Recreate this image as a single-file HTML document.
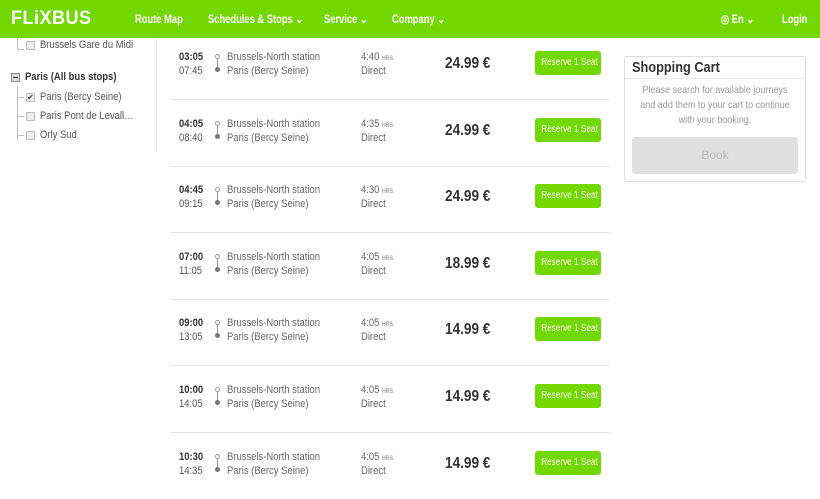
<!DOCTYPE html>
<html><head><meta charset="utf-8"><style>
*{margin:0;padding:0;box-sizing:border-box}
body{width:820px;height:499px;overflow:hidden;background:#fff;font-family:"Liberation Sans",sans-serif;color:#444;position:relative}
.hdr{position:absolute;left:0;top:0;width:820px;height:38px;background:#73d700}
.hdr span{position:absolute;top:12px;color:#fff;font-size:12px;font-weight:bold;transform:scaleX(.78);transform-origin:left;white-space:nowrap}
.logo{position:absolute;left:11px;top:8px;color:#fff;font-weight:900;font-size:19px;letter-spacing:.5px;transform:scaleX(.95);transform-origin:left}
.a{position:absolute;white-space:nowrap}
.n{transform:scaleX(.86);transform-origin:left}
.side{font-size:11px;color:#555}
.cb{position:absolute;width:9px;height:9px;border:1px solid #bbb;background:#eee;border-radius:1px}
.sep{position:absolute;left:170px;width:440px;height:1px;background:#e6e6e6}
.t1{font-size:11px;font-weight:bold;color:#333}
.t2{font-size:11px;color:#555}
.st{font-size:11px;color:#666}
.pr{font-size:16px;font-weight:bold;color:#333;transform:scaleX(.85);transform-origin:left}
.btn{position:absolute;left:535px;width:66px;height:24px;background:#73d700;border-radius:3px;color:#fff;font-size:10px;text-align:center;line-height:24px;white-space:nowrap}
.btn i{font-style:normal;display:inline-block;transform:scaleX(.82)}
.hrs{font-size:6px;color:#777}
</style></head><body>
<div class="hdr">
<div class="logo">FLiXBUS</div>
<span style="left:135px">Route Map</span>
<span style="left:208px">Schedules &amp; Stops ⌄</span>
<span style="left:324px">Service ⌄</span>
<span style="left:392px">Company ⌄</span>
<span style="left:721px">◎ En ⌄</span>
<span style="left:782px">Login</span>
</div>
<div class="a" style="left:156px;top:38px;width:1px;height:113px;background:#e6e6e6"></div>
<div class="a" style="left:17px;top:38px;height:12px;border-left:1px solid #bbb;border-bottom:1px solid #bbb;width:7px"></div>
<div class="cb" style="left:26px;top:41px"></div><div class="a side n" style="left:40px;top:39px">Brussels Gare du Midi</div>
<div class="a" style="left:11px;top:73px;width:9px;height:9px;border:1px solid #888;background:#ddd"></div>
<div class="a" style="left:13px;top:77px;width:5px;height:1px;background:#333"></div>
<div class="a side n" style="left:25px;top:71px;font-weight:bold;color:#333">Paris (All bus stops)</div>
<div class="a" style="left:17px;top:86px;height:54px;border-left:1px solid #bbb"></div>
<div class="a" style="left:17px;top:97px;width:7px;border-top:1px solid #bbb"></div>
<div class="a" style="left:17px;top:116px;width:7px;border-top:1px solid #bbb"></div>
<div class="a" style="left:17px;top:135px;width:7px;border-top:1px solid #bbb"></div>
<div class="cb" style="left:26px;top:93px;font-size:8px;line-height:7px;color:#333">✔</div><div class="a side n" style="left:40px;top:91px">Paris (Bercy Seine)</div>
<div class="cb" style="left:26px;top:112px"></div><div class="a side n" style="left:40px;top:110px">Paris Pont de Levall…</div>
<div class="cb" style="left:26px;top:131px"></div><div class="a side n" style="left:40px;top:129px">Orly Sud</div>

<div class="a" style="left:624px;top:56px;width:182px;height:126px;border:1px solid #ddd;border-radius:3px"></div>
<div class="a" style="left:625px;top:78px;width:180px;height:1px;background:#e6e6e6"></div>
<div class="a" style="left:632px;top:59px;font-size:15px;font-weight:bold;color:#333;transform:scaleX(.85);transform-origin:left">Shopping Cart</div>
<div class="a" style="left:625px;top:83px;width:180px;text-align:center;font-size:10.5px;color:#999;line-height:15px;white-space:nowrap">
<div style="transform:scaleX(.86)">Please search for available journeys<br>and add them to your cart to continue<br>with your booking.</div></div>
<div class="a" style="left:632px;top:137px;width:166px;height:37px;background:#e0e0e0;border-radius:3px;color:#bbb;font-size:12px;text-align:center;line-height:37px">Book</div>

<div id="rows"></div>
<script>
var d=[["03:05","07:45","4:40","24.99"],["04:05","08:40","4:35","24.99"],["04:45","09:15","4:30","24.99"],["07:00","11:05","4:05","18.99"],["09:00","13:05","4:05","14.99"],["10:00","14:05","4:05","14.99"],["10:30","14:35","4:05","14.99"]];
var h="";
d.forEach(function(r,i){var y=Math.round(51+66.6*i);
h+='<div class="a t1 n" style="left:179px;top:'+y+'px">'+r[0]+'</div>';
h+='<div class="a t2 n" style="left:179px;top:'+(y+14)+'px">'+r[1]+'</div>';
h+='<div class="a" style="left:215px;top:'+(y+3)+'px;width:5px;height:5px;border:1px solid #999;border-radius:50%"></div>';
h+='<div class="a" style="left:217px;top:'+(y+8)+'px;width:1px;height:9px;background:#999"></div>';
h+='<div class="a" style="left:215px;top:'+(y+16)+'px;width:5px;height:5px;background:#777;border-radius:50%"></div>';
h+='<div class="a st n" style="left:227px;top:'+y+'px">Brussels-North station</div>';
h+='<div class="a st n" style="left:227px;top:'+(y+14)+'px">Paris (Bercy Seine)</div>';
h+='<div class="a st n" style="left:361px;top:'+y+'px">'+r[2]+' <span class="hrs">HRS.</span></div>';
h+='<div class="a st n" style="left:361px;top:'+(y+14)+'px">Direct</div>';
h+='<div class="a pr" style="left:445px;top:'+(y+4)+'px">'+r[3]+' €</div>';
h+='<div class="btn" style="top:'+y+'px"><i>Reserve 1 Seat</i></div>';
if(i<6)h+='<div class="sep" style="top:'+Math.round(99+66.6*i)+'px"></div>';});
document.getElementById("rows").innerHTML=h;
</script>
</body></html>
